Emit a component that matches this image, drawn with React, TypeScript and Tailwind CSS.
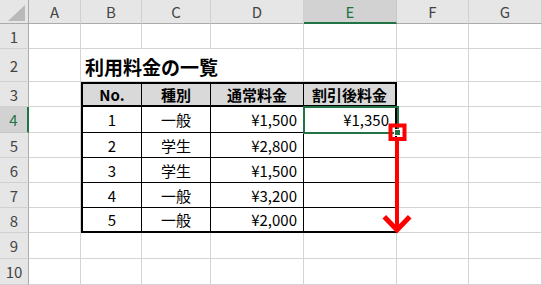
import React from 'react'

const COLS = ['A', 'B', 'C', 'D', 'E', 'F', 'G']

type Row = { no: number; kind: string; price: string; discounted?: string }

const ROWS: Row[] = [
  { no: 1, kind: '一般', price: '¥1,500', discounted: '¥1,350' },
  { no: 2, kind: '学生', price: '¥2,800' },
  { no: 3, kind: '学生', price: '¥1,500' },
  { no: 4, kind: '一般', price: '¥3,200' },
  { no: 5, kind: '一般', price: '¥2,000' },
]

const HEAD = ['No.', '種別', '通常料金', '割引後料金']

const inTable = (r: number, c: number) => r >= 3 && r <= 8 && c >= 1 && c <= 4

function Cell({ r, c }: { r: number; c: number }) {
  if (!inTable(r, c)) {
    return <div className="border-r border-b border-[#d4d4d4] bg-white" />
  }

  const right = c === 4 ? 'border-r-2' : 'border-r'
  const bottom = r === 3 || r === 8 ? 'border-b-2' : 'border-b'
  const left = c === 1 ? 'border-l-2' : ''
  const top = r === 3 ? 'border-t-2' : ''
  const box = `${right} ${bottom} ${left} ${top} border-black flex items-center text-[15px] leading-none`

  if (r === 3) {
    return (
      <div className={`${box} justify-center bg-[#d9d9d9] font-bold`}>
        {HEAD[c - 1]}
      </div>
    )
  }

  const row = ROWS[r - 4]
  if (c === 1) return <div className={`${box} justify-center bg-white`}>{row.no}</div>
  if (c === 2) return <div className={`${box} justify-center bg-white`}>{row.kind}</div>
  if (c === 3) return <div className={`${box} justify-end pr-[6px] bg-white`}>{row.price}</div>

  // 割引後料金
  return (
    <div className={`${box} justify-end pr-[6px] bg-white relative`}>
      {row.discounted}
      {r === 4 && (
        <>
          <div className="absolute -left-px -top-px -right-1 -bottom-0.5 border-2 border-[#217346] z-10" />
          <div className="absolute -right-[6px] -bottom-[4px] w-[7px] h-[7px] bg-[#217346] border border-white z-10" />
        </>
      )}
    </div>
  )
}

function ColHeader({ label }: { label: string }) {
  const active = label === 'E'
  return (
    <div
      className={
        active
          ? 'flex items-center justify-center bg-[#d2d2d2] border-r border-r-[#c8c8c8] border-b-2 border-b-[#217346] text-[#217346] text-[15px] leading-none'
          : 'flex items-center justify-center bg-[#e6e6e6] border-r border-r-[#d0d0d0] border-b border-b-[#ababab] text-[#444] text-[15px] leading-none'
      }
    >
      {label}
    </div>
  )
}

function RowHeader({ n }: { n: number }) {
  const active = n === 4
  return (
    <div
      className={
        active
          ? 'flex items-center justify-center bg-[#d2d2d2] border-b border-b-[#c8c8c8] border-r-2 border-r-[#217346] text-[#217346] text-[15px] leading-none'
          : 'flex items-center justify-center bg-[#e6e6e6] border-b border-b-[#d0d0d0] border-r border-r-[#ababab] text-[#444] text-[15px] leading-none'
      }
    >
      {n}
    </div>
  )
}

export default function App() {
  const rows = Array.from({ length: 10 }, (_, i) => i + 1)

  return (
    <div className="relative w-[542px] h-[285px] overflow-hidden bg-white text-black font-['Noto_Sans_CJK_JP','Liberation_Sans',sans-serif]">
      <div className="grid grid-cols-[29px_52px_61px_69px_93px_93px_72px_73px] grid-rows-[24px_25px_33px_25px_26px_25px_25px_25px_25px_26px_26px]">
        {/* corner */}
        <div className="bg-[#e6e6e6] border-r border-r-[#ababab] border-b border-b-[#ababab]">
          <svg width="28" height="23" viewBox="0 0 28 23">
            <polygon points="8,21 25,21 25,5" fill="#b9b9b9" />
          </svg>
        </div>
        {COLS.map(l => <ColHeader key={l} label={l} />)}

        {rows.map(r => (
          <React.Fragment key={r}>
            <RowHeader n={r} />
            {COLS.map((_, c) => {
              if (r === 2 && c === 1) {
                return (
                  <div key={c} className="col-span-3 border-r border-b border-[#d4d4d4] flex items-center pl-[4px] pt-[2px] text-[19px] font-bold leading-none whitespace-nowrap">
                    利用料金の一覧
                  </div>
                )
              }
              if (r === 2 && (c === 2 || c === 3)) return null
              return <Cell key={c} r={r} c={c} />
            })}
          </React.Fragment>
        ))}
      </div>

      {/* fill-handle callout */}
      <svg className="absolute inset-0 pointer-events-none z-20" width="542" height="285" viewBox="0 0 542 285">
        <rect x="390.5" y="125.5" width="14" height="13.5" fill="none" stroke="#ff0000" strokeWidth="4" />
        <line x1="397" y1="141" x2="397" y2="230" stroke="#ff0000" strokeWidth="4" />
        <polyline points="386,218.5 397,230 408,218.5" fill="none" stroke="#ff0000" strokeWidth="5" strokeLinecap="square" />
      </svg>
    </div>
  )
}
